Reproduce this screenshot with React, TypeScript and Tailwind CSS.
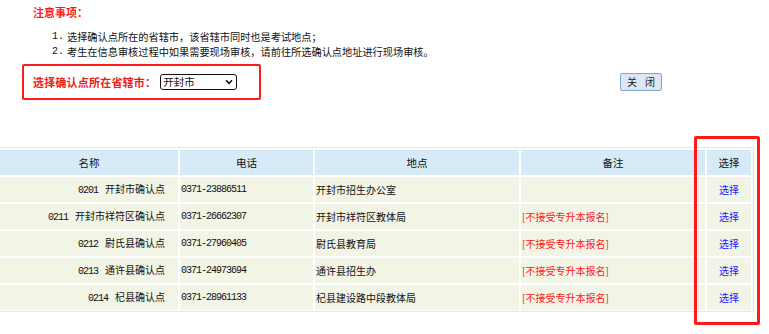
const CJK = "font-['Noto_Sans_CJK_SC',_'Noto_Sans',_sans-serif]";
const NUM = "font-['Liberation_Mono',_monospace] tracking-[-1px]";

type Site = {
  code: string;
  name: string;
  phone: string;
  address: string;
  note: string;
};

const SITES: Site[] = [
  { code: "0201", name: "开封市确认点", phone: "0371-23886511", address: "开封市招生办公室", note: "" },
  { code: "0211", name: "开封市祥符区确认点", phone: "0371-26662307", address: "开封市祥符区教体局", note: "[不接受专升本报名]" },
  { code: "0212", name: "尉氏县确认点", phone: "0371-27960405", address: "尉氏县教育局", note: "[不接受专升本报名]" },
  { code: "0213", name: "通许县确认点", phone: "0371-24973694", address: "通许县招生办", note: "[不接受专升本报名]" },
  { code: "0214", name: "杞县确认点", phone: "0371-28961133", address: "杞县建设路中段教体局", note: "[不接受专升本报名]" },
];

const GRID = "grid grid-cols-[178px_133px_204px_184px_44px] gap-[2px]";

const App = () => {
  return (
    <div className={`relative w-[769px] h-[334px] bg-white overflow-hidden text-[#111] ${CJK}`}>
      {/* 注意事项 */}
      <div className="pt-[4px] pl-[33px] text-[11px] leading-[16px] font-bold text-[#ff1a1a]">
        注意事项：
      </div>
      <ol className="mt-[9px] pl-[52px] text-[10.2px] leading-[15px]">
        <li className="flex">
          <span className={`w-[15px] ${NUM} tracking-normal text-[10px]`}>1.</span>
          <span>选择确认点所在的省辖市，该省辖市同时也是考试地点；</span>
        </li>
        <li className="flex">
          <span className={`w-[15px] ${NUM} tracking-normal text-[10px]`}>2.</span>
          <span>考生在信息审核过程中如果需要现场审核，请前往所选确认点地址进行现场审核。</span>
        </li>
      </ol>

      {/* 省辖市选择 */}
      <div className="mt-[5px] pl-[22px] flex items-center">
        <div className="w-[239px] h-[36px] border-[2px] border-[#ff1a1a] rounded-[2px] flex items-center pl-[9px]">
          <span className="text-[11px] font-bold text-[#ee1c1c] tracking-[0.2px]">选择确认点所在省辖市：</span>
          <div className="ml-[4px] w-[77px] h-[16px] border-[1.5px] border-[#111] rounded-[3px] flex items-center justify-between pl-[2px] pr-[3px] text-[10.5px] leading-none">
            <span>开封市</span>
            <svg width="8" height="6" viewBox="0 0 8 6">
              <path d="M1 1.2 L4 4.4 L7 1.2" fill="none" stroke="#111" strokeWidth="1.6" />
            </svg>
          </div>
        </div>
        <button className="ml-[359px] w-[42px] h-[18px] border border-[#7fa8cf] rounded-[2px] bg-[#dde7f3] text-[10px] leading-none text-[#222] flex items-center justify-center gap-[8px]">
          <span>关</span>
          <span>闭</span>
        </button>
      </div>

      {/* 确认点列表 */}
      <div className="mt-[47px] w-[754px] border-y border-r border-[#d3e9f7] pt-[2px] pb-[1px] pr-[1px] text-[10px]">
        <div className={`${GRID} h-[25px]`}>
          {["名称", "电话", "地点", "备注", "选择"].map((h) => (
            <div key={h} className="bg-[#d6eaf8] flex items-center justify-center text-[10.5px]">
              {h}
            </div>
          ))}
        </div>
        {SITES.map((s) => (
          <div key={s.code} className={`${GRID} h-[25px] mt-[2px]`}>
            <div className="bg-[#f2f4e6] flex items-center justify-end pr-[13px]">
              <span className="leading-none">
                <span className={`${NUM} text-[10px] mr-[7px]`}>{s.code}</span>
                {s.name}
              </span>
            </div>
            <div className="bg-[#f2f4e6] flex items-center pl-[1px]">
              <span className={`${NUM} text-[10px]`}>{s.phone}</span>
            </div>
            <div className="bg-[#f2f4e6] flex items-center pl-[1px]">{s.address}</div>
            <div className="bg-[#f2f4e6] flex items-center pl-[1px] text-[#ff2020]">{s.note}</div>
            <div className="bg-[#f2f4e6] flex items-center justify-center">
              <a href="#" className="text-[#1a1aff]">选择</a>
            </div>
          </div>
        ))}
      </div>

      {/* 标注框 */}
      <div className="absolute left-[694px] top-[136px] w-[66px] h-[189px] border-[3px] border-[#ff1a1a] rounded-[2px] pointer-events-none" />
    </div>
  );
};

export default App;
